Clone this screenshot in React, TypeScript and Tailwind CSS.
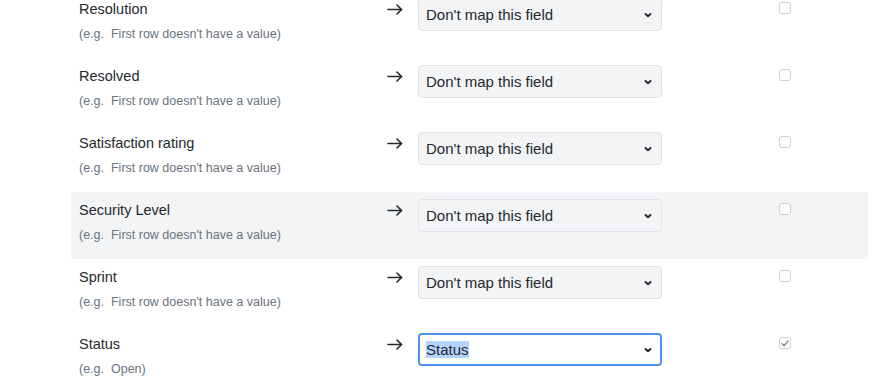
import React from 'react';

const rows = [
  { title: 'Resolution', example: "First row doesn't have a value", value: "Don't map this field" },
  { title: 'Resolved', example: "First row doesn't have a value", value: "Don't map this field" },
  { title: 'Satisfaction rating', example: "First row doesn't have a value", value: "Don't map this field" },
  { title: 'Security Level', example: "First row doesn't have a value", value: "Don't map this field", hover: true },
  { title: 'Sprint', example: "First row doesn't have a value", value: "Don't map this field" },
  { title: 'Status', example: 'Open', value: 'Status', focused: true, checked: true },
];

function Arrow() {
  return (
    <svg width="16" height="11" viewBox="0 0 16 11" fill="none" stroke="#24292e" strokeWidth="1.6" strokeLinecap="round" strokeLinejoin="round">
      <path d="M1 5.5h13.5" />
      <path d="M10 1l4.5 4.5L10 10" />
    </svg>
  );
}

function Chevron() {
  return (
    <svg width="8" height="6" viewBox="0 0 8 6" fill="none" stroke="#24292e" strokeWidth="1.9" strokeLinecap="round" strokeLinejoin="round">
      <path d="M1.5 2l2.5 2.3L6.5 2" />
    </svg>
  );
}

export default function App() {
  return (
    <div className="h-[392px] w-[877px] overflow-hidden bg-white text-[#24292e]" style={{ fontFamily: '"Liberation Sans", Arial, sans-serif' }}>
      <div className="-mt-[9px] ml-[71px] w-[797px]">
        {rows.map((row) => (
          <div key={row.title} className={`flex h-[67px] px-2 ${row.hover ? 'bg-[#f3f4f6]' : ''}`}>
            <div className="w-[308px] pt-2">
              <div className="text-[14.5px] leading-5">{row.title}</div>
              <div className="mt-[7px] text-[12.5px] leading-4 text-[#6a737d]">(e.g.&nbsp; {row.example})</div>
            </div>
            <div className="mt-2 flex h-5 w-[31px] items-center">
              <Arrow />
            </div>
            {row.focused ? (
              <div className="mt-[7px] flex h-[33px] w-[244px] items-center justify-between rounded-[4px] border-2 border-[#4b94ef] bg-white pl-[6px] pr-[8px]">
                <span className="bg-[#b3d4fc] text-[15px] leading-[17px]">{row.value}</span>
                <Chevron />
              </div>
            ) : (
              <div className="mt-[7px] flex h-[33px] w-[244px] items-center justify-between rounded-[4px] border border-[#dfe2e6] bg-[#f3f4f6] pl-[7px] pr-[9px]">
                <span className="text-[15px] leading-5">{row.value}</span>
                <Chevron />
              </div>
            )}
            <div className="ml-[117px] mt-[11px]">
              <div className="flex h-[12px] w-[12px] items-center justify-center rounded-[3px] border border-[#cfcfcf] bg-white">
                {row.checked && (
                  <svg width="8" height="7" viewBox="0 0 8 7" fill="none" stroke="#8a8a8a" strokeWidth="1.5" strokeLinecap="round" strokeLinejoin="round">
                    <path d="M1 3.8l2 2L7 1" />
                  </svg>
                )}
              </div>
            </div>
          </div>
        ))}
      </div>
    </div>
  );
}
